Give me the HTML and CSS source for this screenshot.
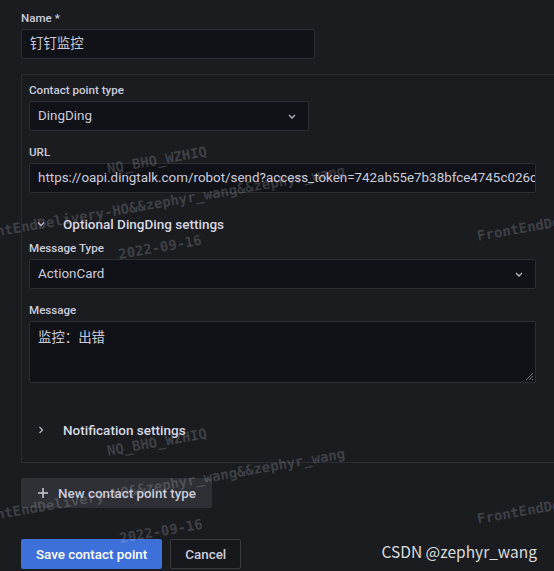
FILE: index.html
```html
<!DOCTYPE html>
<html lang="en">
<head>
  <meta charset="UTF-8">
  <meta name="viewport" content="width=device-width, initial-scale=1.0">
  <title>Contact point - DingDing</title>
  <link rel="stylesheet" href="styles.css">
</head>
<body>
  <div id="page">
    <form class="contact-form">
      <div class="field">
        <label class="field-label">Name *</label>
        <div class="input name-input">钉钉监控</div>
      </div>

      <div class="channel-box">
        <div class="field">
          <label class="field-label">Contact point type</label>
          <div class="input select type-select">
            <span>DingDing</span>
            <svg class="caret" width="8" height="5" viewBox="0 0 8 5"><path d="M1 1l3 3 3-3" /></svg>
          </div>
        </div>

        <div class="field">
          <label class="field-label">URL</label>
          <div class="input wide">https://oapi.dingtalk.com/robot/send?access_token=742ab55e7b38bfce4745c026c8f1e9a</div>
        </div>

        <div class="collapse-head optional-head">
          <svg class="chevron" width="16" height="16" viewBox="0 0 16 16"><path d="M5 6.5l3 3 3-3" /></svg>
          <span>Optional DingDing settings</span>
        </div>

        <div class="field">
          <label class="field-label">Message Type</label>
          <div class="input select wide">
            <span>ActionCard</span>
            <svg class="caret" width="8" height="5" viewBox="0 0 8 5"><path d="M1 1l3 3 3-3" /></svg>
          </div>
        </div>

        <div class="field">
          <label class="field-label">Message</label>
          <div class="textarea wide">
            监控：出错
            <svg class="resizer" width="10" height="10" viewBox="0 0 10 10"><path d="M9 2L2 9M9 5L5 9M9 8L8 9" /></svg>
          </div>
        </div>

        <div class="collapse-head notify-head">
          <svg class="chevron" width="16" height="16" viewBox="0 0 16 16"><path d="M6.5 5l3 3-3 3" /></svg>
          <span>Notification settings</span>
        </div>
      </div>

      <button type="button" class="btn btn-secondary new-btn">
        <svg width="12" height="12" viewBox="0 0 12 12"><path d="M6 1v10M1 6h10" /></svg>
        New contact point type
      </button>

      <div class="actions">
        <button type="button" class="btn btn-primary">Save contact point</button>
        <button type="button" class="btn btn-outline">Cancel</button>
      </div>
    </form>

    <div class="credit">CSDN @zephyr_wang</div>

    <div class="wm" style="left:157px; top:160px">NQ_BHO_WZHIQ</div>
    <div class="wm" style="left:158px; top:203px">FrontEndDelivery-HO&amp;&amp;zephyr_wang&amp;&amp;zephyr_wang</div>
    <div class="wm" style="left:160px; top:247px">2022-09-16</div>
    <div class="wm" style="left:664px; top:203px">FrontEndDelivery-HO&amp;&amp;zephyr_wang&amp;&amp;zephyr_wang</div>
    <div class="wm" style="left:157px; top:442px">NQ_BHO_WZHIQ</div>
    <div class="wm" style="left:158px; top:486px">FrontEndDelivery-HO&amp;&amp;zephyr_wang&amp;&amp;zephyr_wang</div>
    <div class="wm" style="left:161px; top:531px">2022-09-16</div>
    <div class="wm" style="left:664px; top:486px">FrontEndDelivery-HO&amp;&amp;zephyr_wang&amp;&amp;zephyr_wang</div>
  </div>
</body>
</html>
```

FILE: styles.css
```css
body {
  margin: 0;
  background: #1a1c20;
  color: #ccccdc;
  font-family: Roboto, "Noto Sans CJK SC", sans-serif;
  font-size: 13.4px;
}

#page {
  position: relative;
  height: 571px;
  overflow: hidden;
  padding: 11px 0 0 21px;
  box-sizing: border-box;
}

.field {
  margin-bottom: 14px;
}

.field-label {
  display: block;
  font-size: 11.6px;
  font-weight: 500;
  line-height: 15px;
  margin-bottom: 3px;
  color: #ccccdc;
}

.input {
  box-sizing: border-box;
  height: 30px;
  line-height: 28px;
  padding: 0 8px;
  background: #111217;
  border: 1px solid #2c2e33;
  border-radius: 2px;
  white-space: nowrap;
  overflow: hidden;
}

.name-input {
  width: 294px;
}

.channel-box {
  margin-top: 15px;
  border: 1px solid #2a2c31;
  border-right: none;
  padding: 8px 0 17px 7px;
}

.type-select {
  width: 280px;
}

.wide {
  width: 507px;
}

.select {
  display: flex;
  align-items: center;
  justify-content: space-between;
  padding-right: 12px;
}

.caret path,
.chevron path {
  fill: none;
  stroke: #b8b8c8;
  stroke-width: 1.3;
}

.collapse-head {
  display: flex;
  align-items: center;
  height: 30px;
  font-size: 13.5px;
  font-weight: 500;
  color: #d8d8e4;
}

.collapse-head .chevron {
  margin: 0 14px 0 4px;
}

.optional-head {
  margin: 16px 0 2px;
}

.notify-head {
  margin-top: 32px;
}

.textarea {
  position: relative;
  box-sizing: border-box;
  height: 62px;
  padding: 7px 8px;
  line-height: 18px;
  background: #111217;
  border: 1px solid #2c2e33;
  border-radius: 2px;
}

.resizer {
  position: absolute;
  right: 1px;
  bottom: 1px;
}

.resizer path {
  stroke: #6e7079;
  stroke-width: 1;
}

.btn {
  box-sizing: border-box;
  height: 30px;
  padding: 0 15px;
  border-radius: 2px;
  font-family: Roboto, sans-serif;
  font-size: 13.4px;
  font-weight: 500;
  cursor: pointer;
}

.new-btn {
  display: flex;
  align-items: center;
  gap: 9px;
  margin-top: 15px;
  padding: 0 16px;
  background: #2e3035;
  border: none;
  color: #ccccdc;
}

.new-btn path {
  stroke: #ccccdc;
  stroke-width: 1.5;
}

.actions {
  display: flex;
  gap: 8px;
  margin-top: 31px;
}

.btn-primary {
  background: #3d71d9;
  border: none;
  color: #ffffff;
}

.btn-outline {
  padding: 0 14px;
  background: #16181c;
  border: 1px solid #383a40;
  color: #ccccdc;
}

.credit {
  position: absolute;
  right: 17px;
  bottom: 9px;
  font-family: "Noto Sans CJK SC", sans-serif;
  font-size: 15.5px;
  color: #dcdcdc;
}

.wm {
  position: absolute;
  transform: translate(-50%, -50%) rotate(-10deg);
  font-family: "DejaVu Sans Mono", monospace;
  font-size: 14px;
  font-weight: bold;
  white-space: nowrap;
  color: rgba(200, 200, 210, 0.22);
  pointer-events: none;
}
```
